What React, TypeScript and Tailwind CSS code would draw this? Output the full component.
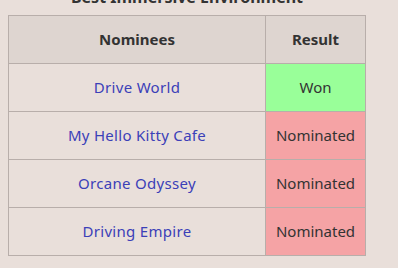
import React from "react";

const rows = [
  { name: "Drive World", result: "Won" },
  { name: "My Hello Kitty Cafe", result: "Nominated" },
  { name: "Orcane Odyssey", result: "Nominated" },
  { name: "Driving Empire", result: "Nominated" },
];

export default function App() {
  return (
    <div
      className="h-[268px] w-[398px] overflow-hidden bg-[#e9dfda] px-2 text-[15px] text-[#333]"
      style={{ fontFamily: '"Noto Sans", sans-serif' }}
    >
      <div className="flow-root h-[15px] w-[358px] text-center text-[16px] font-bold leading-[15px]">
        <div className="-mt-[10px]">Best Immersive Environment</div>
      </div>
      <table className="w-[358px] border-collapse">
        <thead>
          <tr className="h-[48px] bg-[#ded5d0]">
            <th className="w-[257px] border border-[#b8aeaa] font-bold">Nominees</th>
            <th className="border border-[#b8aeaa] font-bold">Result</th>
          </tr>
        </thead>
        <tbody>
          {rows.map((r) => (
            <tr key={r.name} className="h-[48px]">
              <td className="border border-[#b8aeaa] text-center tracking-[0.3px] text-[#3b40b8]">{r.name}</td>
              <td
                className={
                  r.result === "Won"
                    ? "border border-[#b8aeaa] bg-[#99ff99] text-center"
                    : "border border-[#b8aeaa] bg-[#f5a3a5] text-center"
                }
              >
                {r.result}
              </td>
            </tr>
          ))}
        </tbody>
      </table>
    </div>
  );
}
